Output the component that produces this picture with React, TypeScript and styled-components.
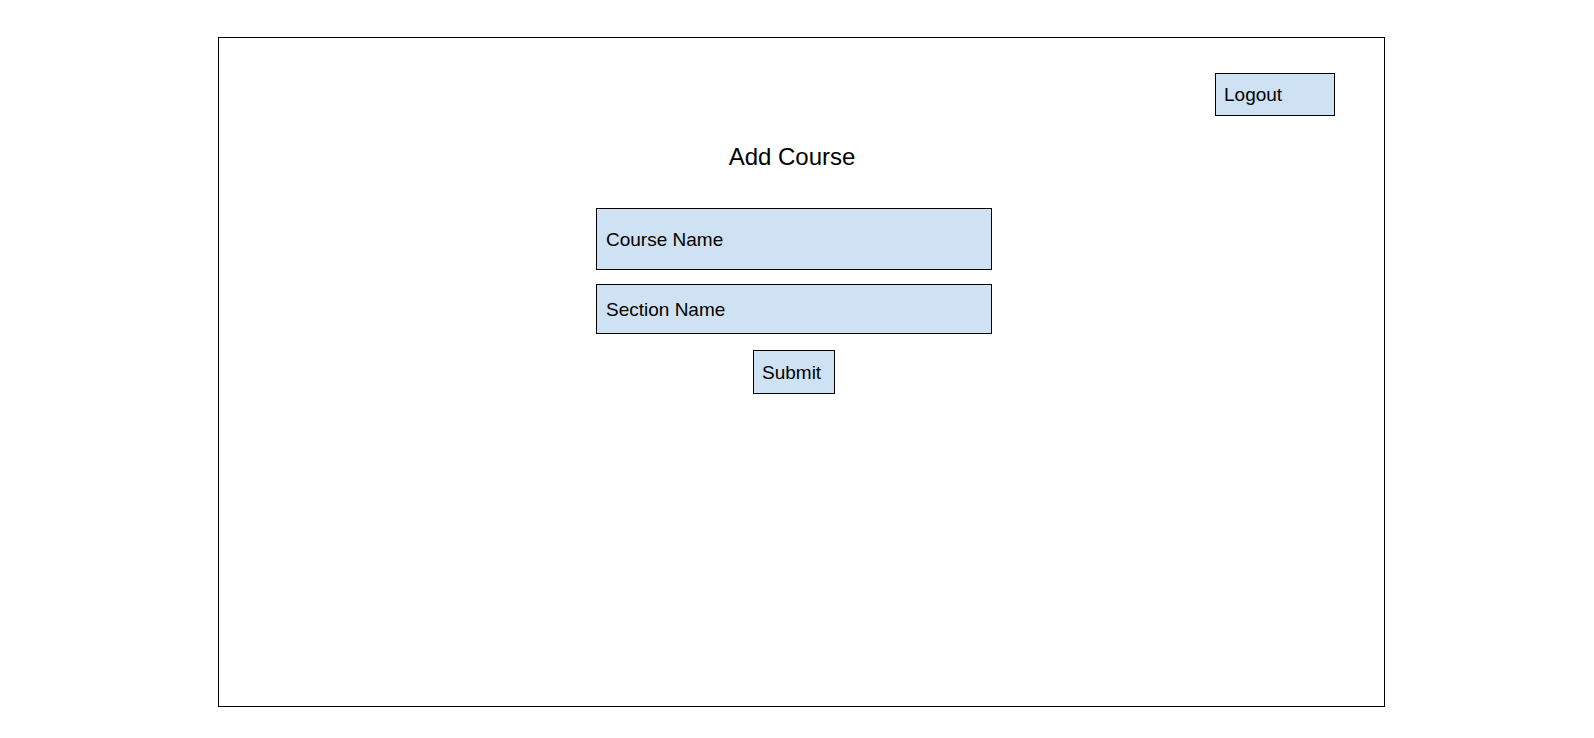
import styled, { createGlobalStyle } from "styled-components";

const GlobalStyle = createGlobalStyle`
  html, body {
    margin: 0;
    padding: 0;
    background: #ffffff;
  }
  body {
    font-family: "Liberation Sans", Arial, sans-serif;
    color: #000000;
  }
`;

const Page = styled.div`
  padding: 37px 0 0 218px;
`;

const Frame = styled.div`
  box-sizing: border-box;
  width: 1167px;
  height: 670px;
  border: 1px solid #000;
  display: flex;
  flex-direction: column;
`;

const TopBar = styled.div`
  display: flex;
  justify-content: flex-end;
  padding: 35px 49px 0 0;
`;

const Box = styled.div<{ w: number; h: number }>`
  box-sizing: border-box;
  width: ${(p) => p.w}px;
  height: ${(p) => p.h}px;
  border: 1px solid #000;
  background-color: #cfe2f3;
  display: flex;
  align-items: center;
  font-size: 19px;
  line-height: 22px;
`;

const LogoutButton = styled(Box)`
  padding: 1px 0 0 8px;
`;

const Form = styled.div`
  width: 396px;
  margin-left: 377px;
  display: flex;
  flex-direction: column;
  align-items: center;
`;

const Title = styled.h2`
  margin: 27px 0 37px;
  font-size: 24px;
  font-weight: normal;
  line-height: 28px;
  transform: translateX(-2px);
`;

const Field = styled(Box)`
  padding: 1px 0 0 9px;
  margin-bottom: 14px;
`;

const SubmitButton = styled(Box)`
  padding: 1px 0 0 8px;
  margin-top: 2px;
`;

export default function App() {
  return (
    <>
      <GlobalStyle />
      <Page>
        <Frame>
          <TopBar>
            <LogoutButton w={120} h={43}>Logout</LogoutButton>
          </TopBar>
          <Form>
            <Title>Add Course</Title>
            <Field w={396} h={62}>Course Name</Field>
            <Field w={396} h={50}>Section Name</Field>
            <SubmitButton w={82} h={44}>Submit</SubmitButton>
          </Form>
        </Frame>
      </Page>
    </>
  );
}
